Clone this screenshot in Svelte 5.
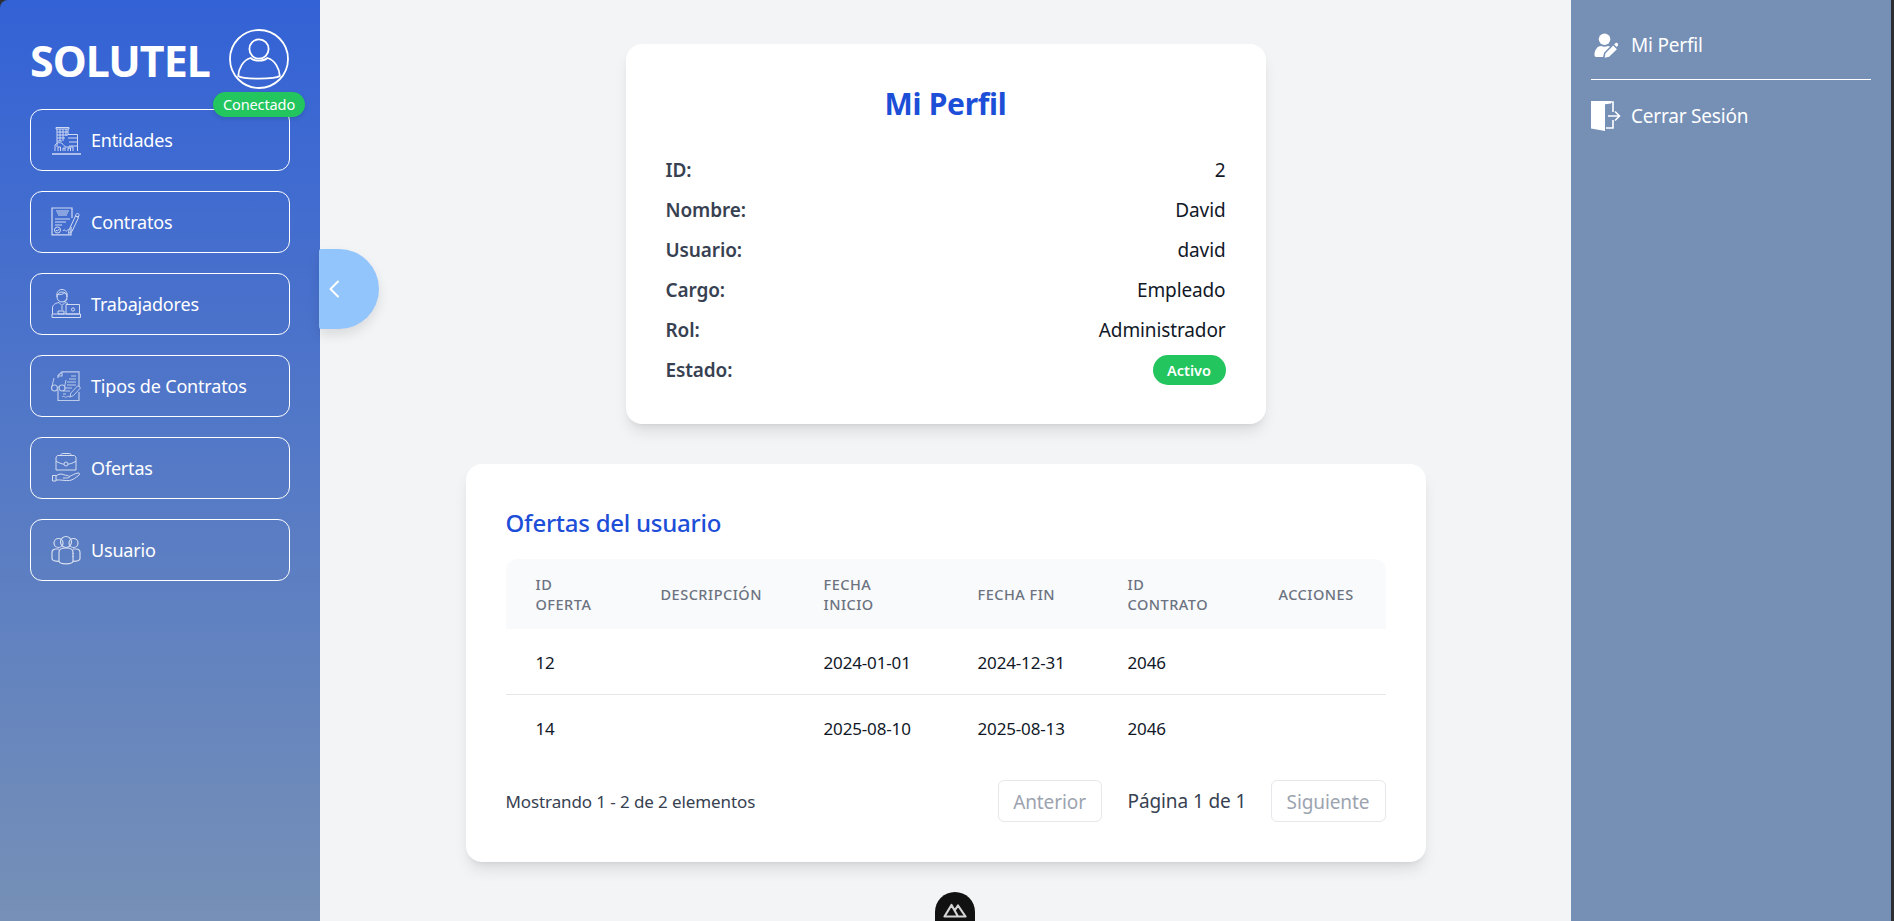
<script>
  const menu = ['Entidades', 'Contratos', 'Trabajadores', 'Tipos de Contratos', 'Ofertas', 'Usuario'];
  const profile = [
    ['ID:', '2'],
    ['Nombre:', 'David'],
    ['Usuario:', 'david'],
    ['Cargo:', 'Empleado'],
    ['Rol:', 'Administrador']
  ];
  const heads = ['ID OFERTA', 'DESCRIPCIÓN', 'FECHA INICIO', 'FECHA FIN', 'ID CONTRATO', 'ACCIONES'];
  const rows = [
    ['12', '', '2024-01-01', '2024-12-31', '2046', ''],
    ['14', '', '2025-08-10', '2025-08-13', '2046', '']
  ];
</script>

<div class="window">
  <aside class="sidebar">
    <header class="brand">
      <span class="logo">SOLUTEL</span>
      <div class="avatar">
        <svg viewBox="0 0 60 60" width="60" height="60" fill="none" stroke="#fff" stroke-width="1.8">
          <circle cx="30" cy="30" r="29" />
          <circle cx="30" cy="20" r="9.600" />
          <path d="M21.500 29C14 31 9.500 40 9.200 47c5 3.500 36.600 3.500 41.600 0C50.500 40 46 31 38.500 29c-4 3.600-13 3.600-17 0Z" />
        </svg>
        <span class="status">Conectado</span>
      </div>
    </header>
    <nav class="menu">
      {#each menu as item, i}
        <a class="menu-item" href="#top">
          <svg class="micon" class:dim={i === 3} viewBox="0 0 30 30" width="30" height="30" fill="none" stroke="#fff" stroke-width="1">
            {#if i === 0}
              <path d="M5 2.500h13v1.500H5zM6 4v18M17 4v6M6 7h11M6 10h11M6 13h8M6 16h5M9 4v12M12 4v12M15 4v7" />
              <path d="M17 9.500h9.500V26M17 13h9M18 17h8M18 21h8" />
              <path d="M4 26v-6c2-2.500 5-3 7-1.500 2 1.500 3 3 3 3.500h8v4M7 26v-4h2.500v4M12 26v-3h2v3M17 26v-3h2.500v3" />
              <path d="M1 29h29" stroke-width="1.500" />
            {:else if i === 1}
              <path d="M20 20v7.800H1V1h20v10" stroke-width="1.200" />
              <path d="M5 4h13M6 6h11M7 8h9" stroke-width="1.200" />
              <path d="M4 12h15M4 15h11M4 18h7" />
              <circle cx="6.500" cy="23" r="3" /><path d="m5 23 1.200 1.200L8.300 22" />
              <path d="M12 24c2-3 2 1 3.500 0 1-.7 1.500-2 2.500-1M18 23 24.500 9l3 1.500L21 24.500l-3.500 2ZM25 7.500c.7-2 3.500-1 3 .7l-.7 1.800-3-1.300Z" />
            {:else if i === 2}
              <circle cx="11" cy="8" r="5" />
              <path d="M6 8c-1-5 2-7.500 5-7.500S17 3 16 8M6.500 5.500c3 .5 6-.5 7.500-2 .5 1 1.500 1.500 2 2M16 9.500c0 2-1.500 3-3.500 3" />
              <path d="M1.500 25v-6c0-3.500 3.500-5 6.500-5.500l3 3 3-3c1 .2 2 .5 3 1M11 17v4" />
              <path d="M15 15.500h13.500V25H15zM1 25h28.500v3.500H1zM7 22h6v3H7z" />
              <circle cx="22" cy="20.500" r="1.600" />
            {:else if i === 3}
              <path d="M7 7V4.500L11 .8h17V16M11 1v4H7M28 21v8.500H7V19" stroke-width="1.200" />
              <path d="M20 5h5M18 8h7M16 11h9M16 14h9M14 17h7M12 20h7M12 23h3M11 26c2-2 3 1 4.500 0s2-1 3.500 0" />
              <circle cx="3.500" cy="17" r="3" stroke-width="1.200" /><circle cx="11" cy="17" r="3" stroke-width="1.200" />
              <path d="M6.500 16.500c1-.7 1.500-.7 1.500 0M.8 16 3 7M13.500 16 15 9" />
              <path d="m19 26 .8-4L27 14.500l2.500 2.500-7 7.500Z" />
            {:else if i === 4}
              <path d="M10 2.500V2c0-1 .7-1.500 1.500-1.500h7c.8 0 1.500.5 1.500 1.500v.5" />
              <path d="M5 5c0-1.300 1-2.500 2-2.500h16c1 0 2 1.200 2 2.500v12H5Z" />
              <path d="M5 8c2.500 2 6 3 8 3.200M25 8c-2.500 2-6 3-8 3.200" />
              <circle cx="15" cy="11" r="2" />
              <path d="M1.500 22.500h3.500V28H1.500zM5 23c2.500-2.200 5.500-2.500 8-1.200 2 .8 5 .5 5.500 2 .3 1.300-3 1.200-6.500 1.200M18 23.500c3-1 6-3 9-3.500 1.500-.2 2.300 1 1 2-3 2.500-6 5-9.500 5.500-4 .5-9-1-13.500-.5" />
            {:else}
              <circle cx="7.500" cy="8" r="4.500" stroke-width="1.200" /><circle cx="22.500" cy="8" r="4.500" stroke-width="1.200" />
              <circle cx="15" cy="7" r="5.500" stroke-width="1.200" />
              <path d="M8 26c0 1.500 2 2.800 7 2.800s7-1.300 7-2.800V17c0-3-3-4-7-4s-7 1-7 4Z" stroke-width="1.200" />
              <path d="M8 14H5c-2.500 0-4 1.500-4 3.500v6c0 1.800 3 2.800 7 2.800M22 14h3c2.500 0 4 1.500 4 3.500v6c0 1.800-3 2.800-7 2.800M22 18v1M22 21v1" stroke-width="1.200" />
            {/if}
          </svg>
          <span>{item}</span>
        </a>
      {/each}
    </nav>
  </aside>

  <button class="collapse" aria-label="Contraer">
    <svg viewBox="0 0 12 18" width="12" height="18" fill="none" stroke="#fff" stroke-width="2" stroke-linecap="round" stroke-linejoin="round"><path d="M10 1.500 2.500 9l7.500 7.500" /></svg>
  </button>

  <main class="content">
    <section class="card profile">
      <h1>Mi Perfil</h1>
      {#each profile as [k, v]}
        <div class="row"><span class="k">{k}</span><span class="v">{v}</span></div>
      {/each}
      <div class="row"><span class="k">Estado:</span><span class="active">Activo</span></div>
    </section>

    <section class="card offers">
      <h2>Ofertas del usuario</h2>
      <table>
        <colgroup>
          <col class="c1" /><col class="c2" /><col class="c3" /><col class="c4" /><col class="c5" /><col class="c6" />
        </colgroup>
        <thead>
          <tr>{#each heads as h}<th>{h}</th>{/each}</tr>
        </thead>
        <tbody>
          {#each rows as r}
            <tr>{#each r as c}<td>{c}</td>{/each}</tr>
          {/each}
        </tbody>
      </table>
      <footer class="pager">
        <span class="count">Mostrando 1 - 2 de 2 elementos</span>
        <div class="pages">
          <button class="page-btn prev" disabled>Anterior</button>
          <span class="page-label">Página 1 de 1</span>
          <button class="page-btn next" disabled>Siguiente</button>
        </div>
      </footer>
    </section>
  </main>

  <aside class="panel">
    <a class="panel-item" href="#top">
      <span class="picon">
        <svg viewBox="0 0 24 26" width="24" height="25" fill="#fff">
          <circle cx="10.500" cy="6.500" r="6" />
          <path d="M0 23c0-6 3.500-9.500 7-9.500 2 1 5 1 7 0 .8 0 1.600.2 2.300.6L10 20.500 9 25H2c-1.200 0-2-.8-2-2Z" />
          <path d="m11.500 21 8-8 3.800 3.800-8 8-4.700 1Zm9-9 1.500-1.500c.5-.5 1.200-.5 1.700 0l.8.8c.5.500.5 1.200 0 1.700L23 14.500Z" />
        </svg>
      </span>
      <span>Mi Perfil</span>
    </a>
    <hr />
    <a class="panel-item" href="#top">
      <span class="picon">
        <svg viewBox="0 0 30 30" width="30" height="30">
          <path d="M0 0h20v2.500l-6 .8V30L0 27.500Z" fill="#fff" />
          <path d="M16 1h6v10M22 19v8h-7M17 15h11m-4-4.500 4.500 4.500-4.500 4.500" fill="none" stroke="#fff" stroke-width="1.600" />
        </svg>
      </span>
      <span>Cerrar Sesión</span>
    </a>
  </aside>

  <div class="devtools">
    <svg viewBox="0 0 24 15" width="24" height="15" fill="none" stroke="#d4d4d4" stroke-width="2.200" stroke-linejoin="round">
      <path d="M1.500 13.500 8.500 2l6.500 11.500ZM12 7l3-4.500 7.500 11h-7" />
    </svg>
  </div>
</div>

<style>
  :global(body) {
    margin: 0;
    background: #2b2f33;
  }

  .window {
    position: relative;
    display: flex;
    height: 921px;
    padding-right: 3px;
    box-sizing: border-box;
    overflow: hidden;
    background: #2b2f33;
    font-family: "Noto Sans", "Open Sans", sans-serif;
    color: #111827;
  }

  a {
    color: inherit;
    text-decoration: none;
  }

  .sidebar {
    flex: 0 0 320px;
    box-sizing: border-box;
    padding: 29px 30px 0;
    border-top-left-radius: 8px;
    background: linear-gradient(180deg, #3362d6 0%, #7690b6 100%);
    color: #fff;
  }

  .brand {
    display: flex;
    align-items: center;
    justify-content: space-between;
    height: 60px;
    padding-right: 1px;
  }

  .logo {
    margin-top: 3px;
    font-size: 43px;
    font-weight: 700;
    letter-spacing: -1px;
    line-height: 1;
  }

  .avatar {
    position: relative;
    width: 60px;
    height: 60px;
  }

  .avatar svg {
    display: block;
  }

  .status {
    position: absolute;
    top: 63px;
    left: -16px;
    z-index: 2;
    width: 92px;
    height: 25px;
    border-radius: 13px;
    background: #22c55e;
    box-shadow: 0 2px 4px rgba(0, 0, 0, 0.12);
    font-size: 14.500px;
    letter-spacing: -0.1px;
    line-height: 25px;
    text-align: center;
  }

  .menu {
    display: flex;
    flex-direction: column;
    gap: 20px;
    margin-top: 20px;
  }

  .menu-item {
    display: flex;
    align-items: center;
    gap: 10px;
    height: 62px;
    box-sizing: border-box;
    padding: 0 20px;
    border: 1px solid #fff;
    border-radius: 12px;
    font-size: 18px;
    letter-spacing: -0.18px;
    line-height: 24px;
  }

  .micon {
    flex: none;
    opacity: 0.75;
  }

  .micon.dim {
    opacity: 0.62;
  }

  .collapse {
    position: absolute;
    top: 249px;
    left: 319px;
    z-index: 3;
    display: flex;
    align-items: center;
    width: 60px;
    height: 80px;
    padding: 0 0 0 9px;
    border: 0;
    border-radius: 2px 40px 40px 2px;
    background: #93c5fd;
    box-shadow: 0 6px 12px rgba(0, 0, 0, 0.1);
  }

  .content {
    flex: 1;
    display: flex;
    flex-direction: column;
    align-items: center;
    gap: 40px;
    padding-top: 44px;
    background: #f3f4f6;
  }

  .card {
    box-sizing: border-box;
    padding: 40px;
    border-radius: 16px;
    background: #fff;
    box-shadow: 0 10px 15px -3px rgba(0, 0, 0, 0.1), 0 4px 6px -4px rgba(0, 0, 0, 0.1);
  }

  .profile {
    width: 640px;
    height: 380px;
  }

  h1 {
    margin: 0 0 26px;
    color: #1d4ed8;
    font-size: 30px;
    font-weight: 700;
    line-height: 40px;
    letter-spacing: -0.3px;
    text-align: center;
  }

  .row {
    display: flex;
    align-items: center;
    justify-content: space-between;
    height: 40px;
    font-size: 19px;
    letter-spacing: -0.12px;
  }

  .k {
    color: #374151;
    font-weight: 600;
  }

  .active {
    width: 73px;
    height: 30px;
    margin-top: -1px;
    border-radius: 15px;
    background: #22c55e;
    color: #fff;
    font-size: 14.500px;
    font-weight: 600;
    line-height: 30px;
    letter-spacing: 0;
    text-align: center;
  }

  .offers {
    width: 960px;
    height: 398px;
  }

  h2 {
    margin: 0 0 17px;
    color: #1d4ed8;
    font-size: 24px;
    font-weight: 500;
    line-height: 38px;
    letter-spacing: -0.25px;
  }

  table {
    width: 880px;
    border-collapse: collapse;
    table-layout: fixed;
  }

  .c1 { width: 125px; }
  .c2 { width: 163px; }
  .c3 { width: 154px; }
  .c4 { width: 150px; }
  .c5 { width: 151px; }
  .c6 { width: 137px; }

  th {
    box-sizing: border-box;
    height: 70px;
    padding: 0 30px;
    background: #f9fafb;
    color: #6b7280;
    font-size: 14.500px;
    font-weight: 500;
    line-height: 20px;
    letter-spacing: 0.5px;
    text-align: left;
  }

  th:nth-child(2), th:nth-child(6) {
    padding-right: 0;
  }

  th:first-child {
    border-top-left-radius: 12px;
  }

  th:last-child {
    border-top-right-radius: 12px;
  }

  td {
    height: 65px;
    padding: 2px 30px 0;
    box-sizing: border-box;
    font-size: 17px;
    letter-spacing: -0.15px;
  }

  tbody tr:first-child td {
    border-bottom: 1px solid #e5e7eb;
  }

  tbody tr:last-child td {
    padding-top: 3px;
  }

  .pager {
    display: flex;
    align-items: center;
    justify-content: space-between;
    margin-top: 21px;
    color: #374151;
  }

  .count {
    padding-top: 1px;
    font-size: 17px;
    letter-spacing: -0.1px;
  }

  .pages {
    display: flex;
    align-items: center;
  }

  .page-btn {
    height: 42px;
    padding: 2px 0 0;
    border: 1px solid #e5e7eb;
    border-radius: 6px;
    background: #fff;
    color: #9ca3af;
    font: inherit;
    font-size: 19px;
    letter-spacing: -0.1px;
  }

  .prev { width: 104px; }
  .next { width: 115px; }

  .page-label {
    width: 117px;
    margin: 0 26px;
    font-size: 19px;
    letter-spacing: -0.1px;
    white-space: nowrap;
  }

  .panel {
    flex: 0 0 320px;
    box-sizing: border-box;
    padding: 25px 20px 0;
    background: #758fb5;
    color: #fff;
  }

  .panel-item {
    display: flex;
    align-items: center;
    gap: 10px;
    height: 40px;
    font-size: 19px;
    letter-spacing: -0.2px;
  }

  .picon {
    display: flex;
    flex: 0 0 30px;
  }

  .panel-item:first-child .picon {
    padding-left: 3px;
    flex-basis: 27px;
  }

  hr {
    height: 1px;
    margin: 14px 0 16px;
    border: 0;
    background: #fff;
  }

  .devtools {
    position: absolute;
    top: 892px;
    left: 935px;
    display: flex;
    justify-content: center;
    width: 40px;
    height: 60px;
    padding-top: 11px;
    box-sizing: border-box;
    border-radius: 20px;
    background: #111;
  }

  .devtools svg {
    display: block;
  }
</style>
